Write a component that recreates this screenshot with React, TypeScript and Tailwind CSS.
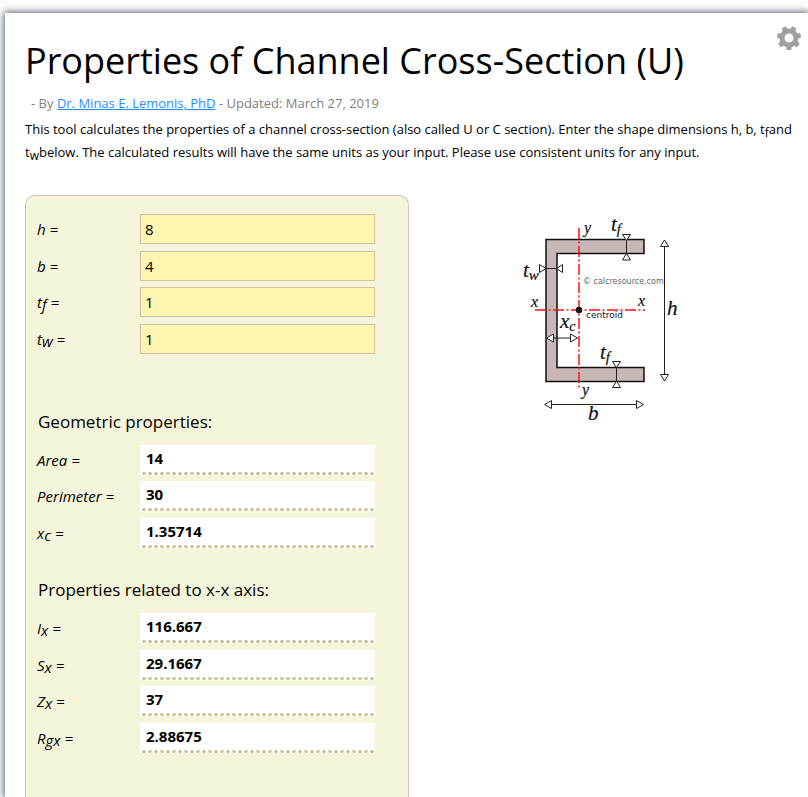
import { useState } from "react";
import type { ReactNode } from "react";

type Dims = { h: string; b: string; tf: string; tw: string };

const fields: { key: keyof Dims; label: ReactNode }[] = [
  { key: "h", label: "h" },
  { key: "b", label: "b" },
  { key: "tf", label: <>t<Sub>f</Sub></> },
  { key: "tw", label: <>t<Sub>w</Sub></> },
];

function Sub({ children }: { children: ReactNode }) {
  return <sub className="bottom-[-2px] text-[15px]">{children}</sub>;
}

function format(value: number) {
  return Number.isFinite(value) ? String(Number(value.toPrecision(6))) : "";
}

function compute(d: Dims) {
  const h = Number(d.h);
  const b = Number(d.b);
  const tf = Number(d.tf);
  const tw = Number(d.tw);
  const hw = h - 2 * tf;
  const bw = b - tw;
  const area = h * tw + 2 * bw * tf;
  const ix = (b * h ** 3 - bw * hw ** 3) / 12;
  return {
    area,
    perimeter: 2 * h + 4 * b - 2 * tw,
    xc: ((h * tw * tw) / 2 + 2 * bw * tf * (tw + bw / 2)) / area,
    ix,
    sx: (2 * ix) / h,
    zx: (b * h * h - bw * hw * hw) / 4,
    rgx: Math.sqrt(ix / area),
  };
}

function FieldLabel({ id, children }: { id: string; children: ReactNode }) {
  return (
    <label htmlFor={id} className="w-[103px] shrink-0 text-[15px] leading-[22px] italic">
      {children} =
    </label>
  );
}

function Result({ id, label, value }: { id: string; label: ReactNode; value: number }) {
  return (
    <div className="flex items-center">
      <FieldLabel id={id}>{label}</FieldLabel>
      <output
        id={id}
        className="block h-[30px] w-[235px] bg-white bg-[radial-gradient(circle,#d0c4a0_1.5px,transparent_2px)] bg-[length:6px_3px] bg-[position:1px_100%] bg-repeat-x px-[6px] text-[15px] leading-[27px] font-bold"
      >
        {format(value)}
      </output>
    </div>
  );
}

function Gear() {
  return (
    <svg viewBox="0 0 24 24" className="size-6" fill="#a0a0a0" aria-hidden="true">
      <path
        fillRule="evenodd"
        d="M12 2.500a9.500 9.500 0 1 0 0 19a9.500 9.500 0 1 0 0-19zM12 7.500a4.500 4.500 0 1 1 0 9a4.500 4.500 0 1 1 0-9z"
      />
      {[0, 1, 2, 3, 4, 5, 6].map((i) => (
        <path key={i} d="M9 19.500L9.800 24h4.400l.8-4.500z" transform={`rotate(${(i * 360) / 7} 12 12)`} />
      ))}
    </svg>
  );
}

function ChannelDiagram() {
  return (
    <svg
      viewBox="521 213 160 212"
      className="h-[212px] w-[160px]"
      role="img"
      aria-label="Channel cross-section dimensions"
    >
      <path
        d="M546 239.500H644V253.500H557V367.500H644V381.500H546Z"
        fill="#c8b7b7"
        stroke="#111"
        strokeWidth="1.500"
      />
      <g stroke="#f11" strokeWidth="1.500" strokeDasharray="11 2.500 2 2.500">
        <path d="M579 228V390" />
        <path d="M535 310H645" />
      </g>
      <circle cx="579" cy="310" r="3.200" fill="#111" />
      <g stroke="#222" strokeWidth="1" fill="none">
        <path d="M664.500 246V375M551 404.500H637M626.500 240V254M616.500 367V381M545 268.500H558M552 338H571" />
        <g fill="#fff">
          <path d="M664.500 240L660.500 246.500H668.500ZM664.500 381L660.500 374.500H668.500Z" />
          <path d="M544.500 404.500L551.500 400.500V408.500ZM643.500 404.500L636.500 400.500V408.500Z" />
          <path d="M626.500 240.500L622.500 234.500H630.500ZM626.500 253.500L622.500 260H630.500Z" />
          <path d="M616.500 367.500L612.500 361.500H620.500ZM616.500 381L612.500 387.500H620.500Z" />
          <path d="M546 268.500L539.500 264.500V272.500ZM556.500 268.500L562.500 264.500V272.500Z" />
          <path d="M546.500 338L553.500 334V342ZM577.500 338L570.500 334V342Z" />
        </g>
      </g>
      <g fill="#111" stroke="#111" strokeWidth="0.200" className="font-['Liberation_Serif',serif] italic">
        <text x="584" y="233" fontSize="16">y</text>
        <text x="582" y="395" fontSize="16">y</text>
        <text x="531" y="307" fontSize="16">x</text>
        <text x="638" y="306" fontSize="16">x</text>
        <text x="667" y="315" fontSize="21">h</text>
        <text x="588" y="420" fontSize="21">b</text>
        <text x="611" y="231" fontSize="21">t<tspan dy="3" fontSize="15">f</tspan></text>
        <text x="600" y="359" fontSize="21">t<tspan dy="3" fontSize="15">f</tspan></text>
        <text x="523" y="277" fontSize="21">t<tspan dy="3" fontSize="15">w</tspan></text>
        <text x="560" y="328" fontSize="21">x<tspan dy="3" fontSize="14">c</tspan></text>
      </g>
      <g className="font-['DejaVu_Sans',sans-serif]">
        <text x="583" y="284" fontSize="8" fill="#666">© calcresource.com</text>
        <text x="586" y="318" fontSize="9" fill="#111">centroid</text>
      </g>
    </svg>
  );
}

export default function App() {
  const [dims, setDims] = useState<Dims>({ h: "8", b: "4", tf: "1", tw: "1" });
  const r = compute(dims);

  return (
    <div className="flex min-h-screen flex-col bg-[#fcfcfc] pt-[13px] pl-[5px] font-['Open_Sans','Noto_Sans',sans-serif] text-black">
      <main className="relative flex flex-1 flex-col bg-white pr-[15px] pl-5 shadow-[0_0_7px_1px_#556070]">
        <button type="button" aria-label="Settings" className="absolute top-[13px] right-[7px]">
          <Gear />
        </button>
        <h1 className="mt-6 text-[36px] leading-[48px]">Properties of Channel Cross-Section (U)</h1>
        <p className="mt-2 pl-[6px] text-[13px] leading-[20px] text-[#808080]">
          - By{" "}
          <a href="#author" className="text-[#1e90ff] underline">
            Dr. Minas E. Lemonis, PhD
          </a>{" "}
          - Updated: March 27, 2019
        </p>
        <p className="mt-[5px] text-[13px] leading-[23px]">
          This tool calculates the properties of a channel cross-section (also called U or C section). Enter the shape
          dimensions h, b, t<sub className="text-[12px]">f</sub>and t<sub className="text-[12px]">w</sub>below. The
          calculated results will have the same units as your input. Please use consistent units for any input.
        </p>
        <div className="mt-[31px] grid flex-1 grid-cols-2">
          <form className="rounded-t-[10px] border border-b-0 border-[#c8c8c8] bg-[#f5f5dc] px-[11px] pt-[15px] pb-10">
            <div className="mb-[53px] grid h-[146px] grid-rows-4">
              {fields.map(({ key, label }) => (
                <div key={key} className="flex items-center">
                  <FieldLabel id={key}>{label}</FieldLabel>
                  <input
                    id={key}
                    value={dims[key]}
                    onChange={(e) => setDims({ ...dims, [key]: e.target.value })}
                    className="h-[30px] w-[235px] border border-[#d0c4a0] bg-[#fff4b0] px-1 text-[15px]"
                  />
                </div>
              ))}
            </div>
            <h2 className="mb-2 pl-px text-[17px] leading-6">Geometric properties:</h2>
            <div className="mb-[27px] grid h-[109px] grid-rows-3">
              <Result id="area" label="Area" value={r.area} />
              <Result id="perimeter" label="Perimeter" value={r.perimeter} />
              <Result id="xc" label={<>x<Sub>c</Sub></>} value={r.xc} />
            </div>
            <h2 className="mb-2 pl-px text-[17px] leading-6">Properties related to x-x axis:</h2>
            <div className="grid h-[146px] grid-rows-4">
              <Result id="ix" label={<>I<Sub>x</Sub></>} value={r.ix} />
              <Result id="sx" label={<>S<Sub>x</Sub></>} value={r.sx} />
              <Result id="zx" label={<>Z<Sub>x</Sub></>} value={r.zx} />
              <Result id="rgx" label={<>R<Sub>gx</Sub></>} value={r.rgx} />
            </div>
          </form>
          <figure className="flex items-start justify-center pt-[18px]">
            <ChannelDiagram />
          </figure>
        </div>
      </main>
    </div>
  );
}
